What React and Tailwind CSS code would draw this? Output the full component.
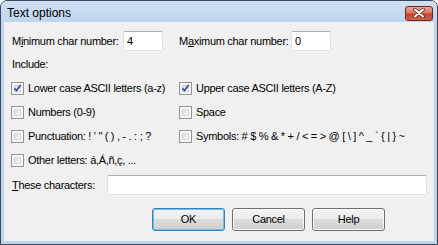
import React from 'react';

const Check = ({ checked }) => (
    <span className="relative w-[13px] h-[13px] shrink-0 border border-[#939393] bg-[#f6f6f6]">
        <span className="absolute inset-[2px] border border-[#d2d5da] bg-gradient-to-br from-[#dcdee2] to-[#fafafa]" />
        {checked && (
            <svg className="absolute inset-0" width="11" height="11" viewBox="0 0 11 11">
                <path d="M2.4 5.3 L4.5 7.6 L8.7 2" fill="none" stroke="#3e57a0" strokeWidth="1.8" />
            </svg>
        )}
    </span>
);

const Option = ({ label, checked }) => (
    <div className="flex items-center gap-[4px] h-[24px]">
        <Check checked={checked} />
        <span className="whitespace-nowrap">{label}</span>
    </div>
);

const Field = ({ value, className }) => (
    <div className={`h-[20px] bg-white border border-[#dfe3e9] border-t-[#abadb3] rounded-[2px] flex items-center pl-[3px] ${className}`}>
        {value}
    </div>
);

const Btn = ({ children, def }) => (
    <div className={`w-[73px] h-[23px] rounded-[3px] border flex items-center justify-center ${def ? 'border-[#3c7fb1] shadow-[inset_0_0_0_1px_#6fc0ea]' : 'border-[#707070] shadow-[inset_0_0_0_1px_#fbfbfb]'} bg-[linear-gradient(#f3f3f3_0%,#ebebeb_50%,#dddddd_50%,#cfcfcf_100%)]`}>
        {children}
    </div>
);

export default function App() {
    return (
        <div className="w-[438px] h-[245px] border border-[#3b4859] rounded-t-[7px] bg-[#bfd4ee] flex flex-col font-['Liberation_Sans',sans-serif] text-[11px] tracking-[-0.3px] text-black overflow-hidden">
            {/* Title bar */}
            <div className="h-[21px] shrink-0 flex items-center justify-between pl-[6px] pr-[4px] bg-gradient-to-b from-[#d0e0f4] to-[#c0d4ee]">
                <span className="text-[12px] tracking-normal mt-[2px]">Text options</span>
                <div className="w-[28px] h-[15px] mt-[3px] rounded-[3px] border border-[#6d2419] bg-[linear-gradient(#e9a99a_0%,#d7735f_45%,#c4412b_55%,#d0654e_100%)] flex items-center justify-center">
                    <svg width="12" height="10" viewBox="0 0 12 10">
                        <path d="M2 1.5 L10 8.5 M10 1.5 L2 8.5" stroke="#5a2a22" strokeWidth="3.6" strokeLinecap="round" />
                        <path d="M2 1.5 L10 8.5 M10 1.5 L2 8.5" stroke="#ffffff" strokeWidth="2" strokeLinecap="round" />
                    </svg>
                </div>
            </div>

            {/* Client area */}
            <div className="flex-1 mx-[3px] mb-[3px] bg-[#f0f0f0] pl-[8px] pt-[9px] flex flex-col">
                <div className="flex items-center">
                    <span className="w-[111px]">M<u>i</u>nimum char number:</span>
                    <Field value="4" className="w-[40px]" />
                    <span className="w-[112px] ml-[16px]">M<u>a</u>ximum char number:</span>
                    <Field value="0" className="w-[40px]" />
                </div>

                <div className="h-[13px] mt-[7px] leading-[13px]">Include:</div>

                <div className="mt-[5px] -ml-[1px] grid grid-cols-[168px_1fr]">
                    <Option label="Lower case ASCII letters (a-z)" checked />
                    <Option label="Upper case ASCII letters (A-Z)" checked />
                    <Option label="Numbers (0-9)" />
                    <Option label="Space" />
                    <Option label="Punctuation: ! ' &quot; ( ) , - . : ; ?" />
                    <Option label="Symbols: # $ % & * + / < = > @ [ \ ] ^ _ ` { | } ~" />
                    <Option label="Other letters: á,Á,ñ,ç, ..." />
                </div>

                <div className="flex items-center mt-[3px]">
                    <span className="w-[95px]"><u>T</u>hese characters:</span>
                    <Field value="" className="w-[320px]" />
                </div>

                <div className="flex gap-[7px] ml-[140px] mt-[13px]">
                    <Btn def>OK</Btn>
                    <Btn>Cancel</Btn>
                    <Btn>Help</Btn>
                </div>
            </div>
        </div>
    );
}
